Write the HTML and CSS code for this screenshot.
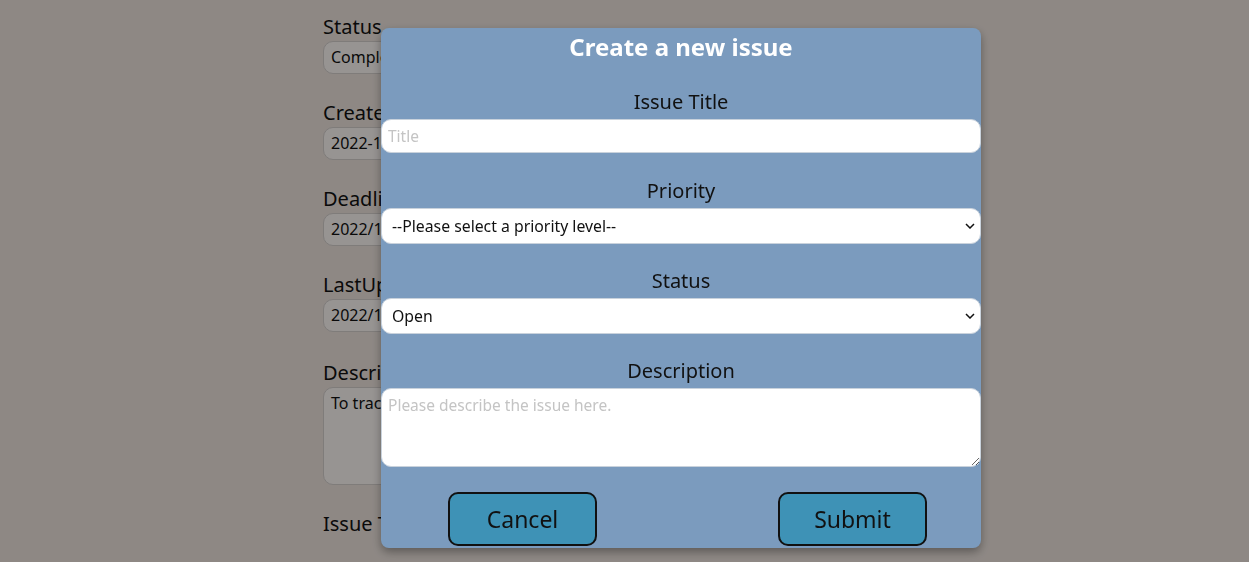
FILE: index.html
```html
<!DOCTYPE html>
<html lang="en">
<head>
<meta charset="utf-8">
<title>Create a new issue</title>
<link rel="stylesheet" href="styles.css">
</head>
<body>
<main class="page">
  <div class="detail">
    <div class="field">
      <label class="field-label">Status</label>
      <div class="field-box">Completed</div>
    </div>
    <div class="field">
      <label class="field-label">CreatedDate</label>
      <div class="field-box">2022-10-21</div>
    </div>
    <div class="field">
      <label class="field-label">Deadline</label>
      <div class="field-box">2022/10/30</div>
    </div>
    <div class="field">
      <label class="field-label">LastUpdated</label>
      <div class="field-box">2022/10/25</div>
    </div>
    <div class="field desc-field">
      <label class="field-label">Description</label>
      <div class="field-box area">To track the progress of issues</div>
    </div>
    <div class="field">
      <label class="field-label">Issue Title</label>
    </div>
  </div>
</main>
<div class="backdrop"></div>
<form class="modal">
  <h2 class="modal-title">Create a new issue</h2>
  <div class="group g1">
    <label class="label" for="title">Issue Title</label>
    <input class="control" id="title" type="text" placeholder="Title">
  </div>
  <div class="group g2">
    <label class="label" for="priority">Priority</label>
    <select class="control select" id="priority">
      <option>--Please select a priority level--</option>
    </select>
  </div>
  <div class="group g3">
    <label class="label" for="status">Status</label>
    <select class="control select" id="status">
      <option>Open</option>
    </select>
  </div>
  <div class="group g4">
    <label class="label" for="desc">Description</label>
    <textarea class="control textarea" id="desc" placeholder="Please describe the issue here."></textarea>
  </div>
  <div class="actions">
    <button type="button" class="btn">Cancel</button>
    <button type="button" class="btn">Submit</button>
  </div>
</form>
</body>
</html>
```
FILE: styles.css
```css
html, body {
  margin: 0;
  padding: 0;
  height: 100%;
  overflow: hidden;
}
body {
  background: #e5dcd6;
  font-family: "Noto Sans", "Open Sans", sans-serif;
  color: #111;
}
.page {
  padding: 13px 0 0 323px;
}
.detail {
  display: flex;
  flex-direction: column;
  width: 500px;
}
.field {
  display: flex;
  flex-direction: column;
  margin-bottom: 25px;
}
.desc-field {
  margin-top: 2px;
}
.field-label {
  font-size: 20px;
  line-height: 28px;
}
.field-box {
  height: 33px;
  box-sizing: border-box;
  border: 1px solid #cdc8c5;
  border-radius: 10px;
  background: #f4efec;
  font-size: 16px;
  line-height: 31px;
  padding: 0 7px;
  white-space: nowrap;
}
.field-box.area {
  height: 98px;
  line-height: 26px;
  padding-top: 2px;
}
.backdrop {
  position: fixed;
  inset: 0;
  background: rgba(0, 0, 0, 0.38);
}
.modal {
  position: fixed;
  left: 381px;
  top: 28px;
  width: 600px;
  height: 520px;
  box-sizing: border-box;
  background: #7b9bbe;
  border-radius: 8px;
  box-shadow: 0 4px 10px rgba(0, 0, 0, 0.35);
  display: flex;
  flex-direction: column;
  text-align: center;
  margin: 0;
}
.modal-title {
  margin: 0;
  font-size: 24px;
  line-height: 38px;
  font-weight: 700;
  color: #ffffff;
}
.group {
  display: flex;
  flex-direction: column;
}
.g1 { margin-top: 21px; }
.g2 { margin-top: 23px; }
.g3 { margin-top: 22px; }
.g4 { margin-top: 22px; }
.label {
  font-size: 20px;
  line-height: 30px;
  margin-bottom: 2px;
  color: #111;
}
.control {
  box-sizing: border-box;
  width: 600px;
  height: 34px;
  margin: 0;
  border: 1px solid #c9d2dc;
  border-radius: 10px;
  background: #ffffff;
  font-family: "Noto Sans", "Open Sans", sans-serif;
  font-size: 15.5px;
  color: #111;
  padding: 0 6px;
  outline: none;
}
.control::placeholder {
  color: #c4c4c4;
}
.select {
  -webkit-appearance: none;
  appearance: none;
  height: 36px;
  padding: 0 24px 0 10px;
  font-size: 15.8px;
  background: #ffffff url("data:image/svg+xml,%3Csvg xmlns='http://www.w3.org/2000/svg' width='10' height='6' viewBox='0 0 10 6'%3E%3Cpath d='M1 1l4 4 4-4' fill='none' stroke='%23111' stroke-width='1.5'/%3E%3C/svg%3E") no-repeat right 5px center;
}
.textarea {
  height: 79px;
  padding: 5px 6px;
  resize: vertical;
  line-height: 22px;
}
.actions {
  display: flex;
  justify-content: space-between;
  padding: 0 54px 0 67px;
  margin-top: 25px;
}
.btn {
  width: 149px;
  height: 54px;
  box-sizing: border-box;
  border: 2px solid #111;
  border-radius: 10px;
  background: #3e92b6;
  font-family: "Noto Sans", "Open Sans", sans-serif;
  font-size: 23px;
  color: #111;
  padding: 0;
}
```
